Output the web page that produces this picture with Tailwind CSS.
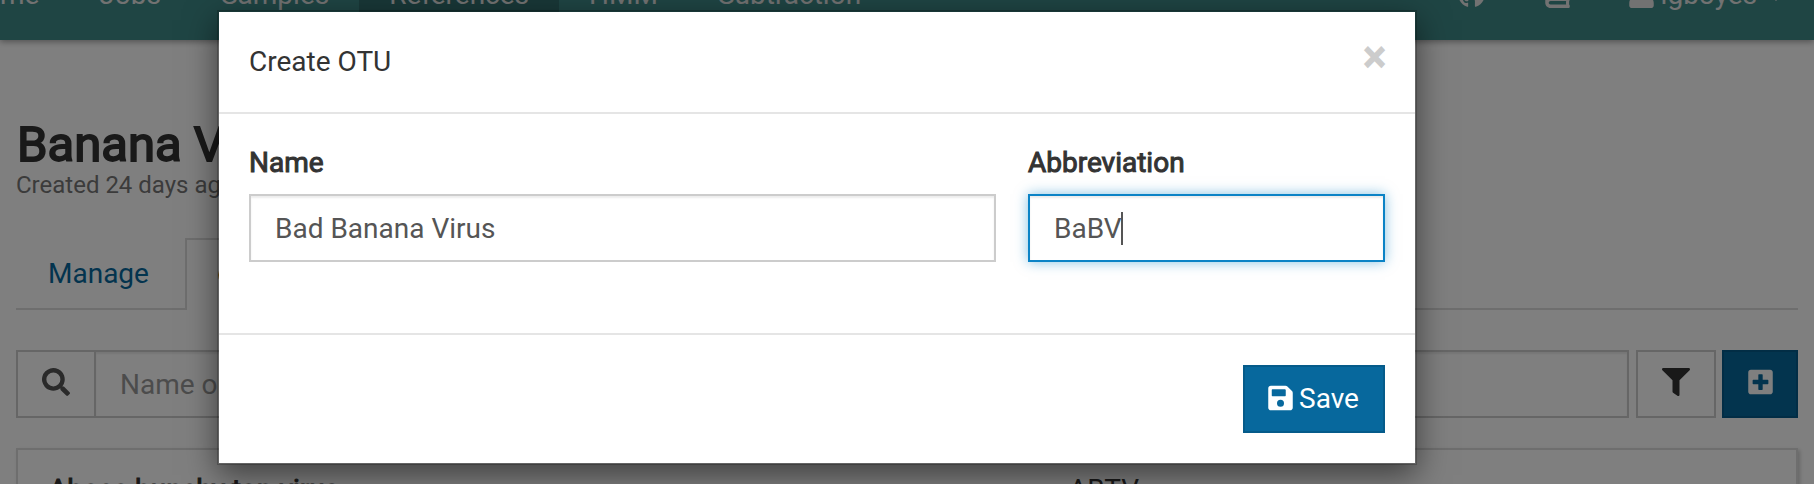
<!DOCTYPE html>
<html lang="en">
<head>
<meta charset="utf-8">
<title>Create OTU</title>
<script src="https://cdn.jsdelivr.net/npm/@tailwindcss/browser@4"></script>
</head>
<body class="relative h-[484px] w-[1814px] overflow-hidden bg-white font-[Roboto,sans-serif] text-[28px] leading-[40px] text-[#333]">
<div class="flex h-[484px] flex-col overflow-hidden">
  <nav class="flex h-10 shrink-0 justify-between bg-[#3e8a88] text-[#e4e4e4] shadow-[0_2px_6px_rgba(0,0,0,0.35)]">
    <div class="-ml-[66px] flex">
      <a class="px-[30px]"><span class="-mt-[25px] block">Home</span></a>
      <a class="px-[30px]"><span class="-mt-[25px] block">Jobs</span></a>
      <a class="px-[30px]"><span class="-mt-[25px] block">Samples</span></a>
      <a class="bg-[#327170] px-[30px]"><span class="-mt-[25px] block">References</span></a>
      <a class="px-[30px]"><span class="-mt-[25px] block">HMM</span></a>
      <a class="px-[30px]"><span class="-mt-[25px] block">Subtraction</span></a>
    </div>
    <div class="-mt-[25px] flex h-10 pr-[30px]">
      <svg class="mt-[5px] mr-[60px] h-7 w-[27px]" viewBox="0 0 496 512" fill="currentColor"><path d="M244.800 8C106.100 8 0 113.300 0 252c0 110.900 69.800 205.800 169.500 239.200 12.800 2.300 17.300-5.600 17.300-12.100 0-6.200-.3-40.400-.3-61.400 0 0-70 15-84.700-29.800 0 0-11.400-29.100-27.800-36.600 0 0-22.900-15.700 1.600-15.400 0 0 24.900 2 38.600 25.800 21.900 38.600 58.600 27.500 72.900 20.900 2.300-16 8.800-27.100 16-33.700-55.900-6.200-112.300-14.300-112.300-110.500 0-27.500 7.600-41.300 23.600-58.900-2.600-6.500-11.100-33.300 2.600-67.900 20.900-6.500 69 27 69 27 20-5.600 41.500-8.500 62.800-8.500s42.800 2.900 62.800 8.500c0 0 48.100-33.600 69-27 13.700 34.700 5.200 61.400 2.600 67.900 16 17.700 25.800 31.500 25.800 58.900 0 96.500-58.900 104.200-114.800 110.500 9.200 7.900 17 22.900 17 46.400 0 33.700-.3 75.400-.3 83.600 0 6.500 4.600 14.400 17.300 12.100C428.200 457.800 496 362.900 496 252 496 113.300 383.500 8 244.800 8z"/></svg>
      <svg class="mt-[5px] mr-[59px] h-7 w-[25px]" viewBox="0 0 448 512" fill="currentColor"><path d="M448 360V24c0-13-11-24-24-24H96C43 0 0 43 0 96v320c0 53 43 96 96 96h328c13 0 24-11 24-24v-16c0-8-4-14-9-19-4-15-4-59 0-74 5-4 9-11 9-19zM381 448H96c-18 0-32-14-32-32s14-32 32-32h285c-2 17-2 47 0 64z"/></svg>
      <svg class="mt-[5px] mr-[7px] h-7 w-[25px]" viewBox="0 0 448 512" fill="currentColor"><path d="M224 256a128 128 0 1 0 0-256 128 128 0 0 0 0 256zm90 32H134C60 288 0 348 0 422v42c0 27 21 48 48 48h352c27 0 48-21 48-48v-42c0-74-60-134-134-134z"/></svg>
      <span>igboyes</span>
      <span class="mt-[18px] ml-[11px] size-0 border-x-8 border-t-8 border-x-transparent"></span>
    </div>
  </nav>
  <main class="px-4">
    <h1 class="mt-[77px] pl-px text-[49px] leading-[56px] whitespace-nowrap [-webkit-text-stroke:1.8px_#333]">Banana Viruses</h1>
    <p class="-mt-[5px] text-[24px] leading-[34px] text-[#777]">Created 24 days ago by igboyes</p>
    <div class="mt-9 flex h-[72px] border-b-2 border-[#ddd]">
      <span class="w-[169px] pt-[16px] pl-8 text-[#07689d]">Manage</span>
      <span class="flex h-[72px] w-[200px] items-center border-2 border-b-0 border-[#ddd] bg-white pl-[31px]"><span class="size-5 rounded-full bg-[#c98a20]"></span></span>
    </div>
    <div class="mt-10 flex h-[68px]">
      <span class="flex w-20 items-center justify-center border-2 border-[#ccc] text-[#555]">
        <svg class="-mt-1 size-7" viewBox="0 0 512 512" fill="currentColor"><path d="M505 443 405 343c-4-4-11-7-17-7h-16a208 208 0 1 0-36 36v16c0 6 3 13 7 17l100 100c9 9 24 9 34 0l28-28c9-10 9-25 0-34zM208 336a128 128 0 1 1 0-256 128 128 0 0 1 0 256z"/></svg>
      </span>
      <span class="-ml-[2px] w-[1535px] border-2 border-[#ccc] pt-[13px] pl-6 text-[#999] shadow-[inset_0_2px_2px_rgba(0,0,0,0.075)]">Name or abbreviation</span>
      <span class="ml-[7px] flex w-20 items-center justify-center border-2 border-[#ccc]">
        <svg class="-mt-1 size-7" viewBox="0 0 512 512" fill="currentColor"><path d="M488 0H24C3 0-8 26 7 41l185 185v206c0 8 4 15 10 20l80 56c16 11 38 0 38-20V226L505 41c15-15 4-41-17-41z"/></svg>
      </span>
      <span class="ml-[6px] flex w-[76px] items-center justify-center border-2 border-[#055b8a] bg-[#07689d] text-white">
        <svg class="-mt-1 h-7 w-[25px]" viewBox="0 0 448 512" fill="currentColor"><path d="M400 32H48C21 32 0 53 0 80v352c0 27 21 48 48 48h352c27 0 48-21 48-48V80c0-27-21-48-48-48zm-32 252c0 7-5 12-12 12h-92v92c0 7-5 12-12 12h-56c-7 0-12-5-12-12v-92H92c-7 0-12-5-12-12v-56c0-7 5-12 12-12h92v-92c0-7 5-12 12-12h56c7 0 12 5 12 12v92h92c7 0 12 5 12 12v56z"/></svg>
      </span>
    </div>
    <div class="mt-[30px] flex h-[100px] border-2 border-[#ddd] pt-[20px] pl-[31px] shadow-[2px_2px_4px_rgba(0,0,0,0.2)]">
      <span class="w-[1020px] [-webkit-text-stroke:1px_#333]">Abaca bunchy top virus</span><span>ABTV</span>
    </div>
  </main>
</div>
<div class="absolute inset-0 bg-black/50"></div>
<section class="absolute top-[10px] left-[217px] flex h-[455px] w-[1200px] flex-col border-2 border-black/20 bg-white bg-clip-padding shadow-[0_10px_30px_rgba(0,0,0,0.5)]">
  <header class="flex h-[102px] shrink-0 justify-between border-b-2 border-[#e5e5e5] px-[30px] pt-[30px]">
    <h2>Create OTU</h2>
    <span class="-mt-[6px] -mr-px text-[42px] leading-[42px] text-[#ccc] [-webkit-text-stroke:2px_#ccc]">×</span>
  </header>
  <div class="flex h-[219px] shrink-0 gap-8 px-[30px] pt-[29px]">
    <label class="w-[747px]"><span class="block [-webkit-text-stroke:1px_#333]">Name</span>
      <span class="mt-[11px] block h-[68px] border-2 border-[#ccc] pt-[13px] pl-6 text-[#555] shadow-[inset_0_2px_2px_rgba(0,0,0,0.075)]">Bad Banana Virus</span></label>
    <label class="w-[357px]"><span class="block [-webkit-text-stroke:1px_#333]">Abbreviation</span>
      <span class="mt-[11px] flex h-[68px] border-2 border-[#0b83c6] pt-[13px] pl-6 text-[#555] shadow-[inset_0_2px_2px_rgba(0,0,0,0.075),0_0_12px_rgba(11,131,198,0.5)]">BaBV<span class="mt-[3px] -ml-px h-[33px] w-[2px] bg-[#555]"></span></span></label>
  </div>
  <footer class="flex grow justify-end border-t-2 border-[#e5e5e5] px-[30px] pt-[30px]">
    <button class="flex h-[68px] w-[142px] border-2 border-[#055b8a] bg-[#07689d] pt-[12px] pl-[23px] text-white">
      <svg class="mt-[5px] mr-[6px] h-7 w-[25px]" viewBox="0 0 448 512" fill="currentColor"><path d="m434 130-84-84c-9-9-21-14-34-14H48C21 32 0 53 0 80v352c0 27 21 48 48 48h352c27 0 48-21 48-48V164c0-13-5-25-14-34zM224 416a64 64 0 1 1 0-128 64 64 0 0 1 0 128zm96-305v101c0 7-5 12-12 12H76c-7 0-12-5-12-12V108c0-7 5-12 12-12h229c3 0 6 1 8 4l4 3c2 2 3 5 3 8z"/></svg>
      <span>Save</span>
    </button>
  </footer>
</section>
</body>
</html>
